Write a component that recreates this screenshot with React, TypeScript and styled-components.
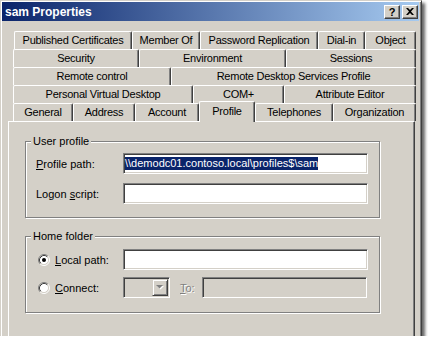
import React from "react";
import styled, {createGlobalStyle} from "styled-components";

const GlobalStyle = createGlobalStyle`
  html, body {
    margin: 0;
    padding: 0;
    background: #ffffff;
  }
  body {
    font-family: "Liberation Sans", Arial, sans-serif;
    font-size: 11px;
    color: #000;
  }
`;

const Window = styled.div`
  width: 422px;
  height: 336px;
  box-sizing: border-box;
  background: #d4d0c8;
  border: 1px solid;
  border-color: #d4d0c8 #404040 #404040 #d4d0c8;
  border-bottom: none;
  padding: 1px 2px 0 1px;
  box-shadow: inset 1px 1px 0 #fff, inset -1px 0 0 #808080, 3px 3px 3px rgba(0, 0, 0, 0.6);
  overflow: hidden;
  display: flex;
  flex-direction: column;
`;

const TitleBar = styled.div`
  height: 19px;
  flex-shrink: 0;
  display: flex;
  align-items: center;
  padding: 0 1px 0 3px;
  background: linear-gradient(to right, #0a246a, #a6caf0);
`;

const Title = styled.span`
  flex: 1;
  color: #fff;
  font-weight: bold;
  font-size: 12px;
`;

const CaptionButton = styled.div`
  width: 16px;
  height: 14px;
  margin-left: 2px;
  box-sizing: border-box;
  background: #d4d0c8;
  border: 1px solid;
  border-color: #fff #404040 #404040 #fff;
  box-shadow: inset -1px -1px 0 #808080;
  display: flex;
  align-items: center;
  justify-content: center;
  font-weight: bold;
  font-size: 11px;
  line-height: 12px;
`;

const TabControl = styled.div`
  margin: 10px 0 0 6px;
  display: flex;
  flex-direction: column;
`;

const TabRow = styled.div<{ $indent: number }>`
  display: flex;
  align-items: flex-end;
  height: 18px;
  padding-left: ${p => p.$indent}px;
`;

const Tab = styled.div<{ $w: number; $selected?: boolean }>`
  width: ${p => p.$w}px;
  height: ${p => (p.$selected ? 21 : 18)}px;
  margin-top: ${p => (p.$selected ? -2 : 0)}px;
  margin-bottom: ${p => (p.$selected ? -1 : 0)}px;
  position: ${p => (p.$selected ? "relative" : "static")};
  z-index: ${p => (p.$selected ? 1 : "auto")};
  box-sizing: border-box;
  flex-shrink: 0;
  background: #d4d0c8;
  border-top: 1px solid #fff;
  border-left: 1px solid #fff;
  border-right: 1px solid #404040;
  border-radius: 2px 2px 0 0;
  box-shadow: inset -1px 0 0 #808080;
  text-align: center;
  line-height: ${p => (p.$selected ? 18 : 16)}px;
  letter-spacing: -0.25px;
  white-space: nowrap;
`;

const Panel = styled.div`
  width: 407px;
  height: 240px;
  box-sizing: border-box;
  border-top: 1px solid #fff;
  border-left: 1px solid #fff;
  border-right: 1px solid #404040;
  box-shadow: inset -1px 0 0 #808080;
  display: flex;
  flex-direction: column;
  padding: 19px 0 0 16px;
  gap: 18px;
`;

const GroupBox = styled.div<{ $pad: string; $gap: number }>`
  position: relative;
  width: 355px;
  height: 77px;
  box-sizing: border-box;
  border: 1px solid #808080;
  box-shadow: inset 1px 1px 0 #fff, 1px 1px 0 #fff;
  padding: ${p => p.$pad};
  display: flex;
  flex-direction: column;
  gap: ${p => p.$gap}px;
`;

const Legend = styled.span`
  position: absolute;
  top: -8px;
  left: 5px;
  padding: 0 2px;
  background: #d4d0c8;
  line-height: 14px;
`;

const FieldRow = styled.div`
  display: flex;
  align-items: center;
  height: 21px;
`;

const Label = styled.span<{ $w: number; $ml?: number; $disabled?: boolean }>`
  width: ${p => p.$w}px;
  margin-left: ${p => p.$ml ?? 0}px;
  flex-shrink: 0;
  white-space: nowrap;
  color: ${p => (p.$disabled ? "#808080" : "#000")};
  text-shadow: ${p => (p.$disabled ? "1px 1px 0 #fff" : "none")};
`;

const RadioLabel = styled.span`
  width: 85px;
  display: flex;
  align-items: center;
  gap: 5px;
  flex-shrink: 0;
  white-space: nowrap;
`;

const TextBox = styled.div<{ $w: number; $disabled?: boolean }>`
  width: ${p => p.$w}px;
  height: 21px;
  box-sizing: border-box;
  flex-shrink: 0;
  border: 1px solid;
  border-color: #808080 #fff #fff #808080;
  box-shadow: inset 1px 1px 0 #404040, inset -1px -1px 0 #d4d0c8;
  background: ${p => (p.$disabled ? "#d4d0c8" : "#fff")};
  padding: 1px;
  display: flex;
  align-items: center;
  justify-content: ${p => (p.$disabled ? "flex-end" : "flex-start")};
  white-space: nowrap;
  overflow: hidden;
`;

const Selection = styled.span`
  background: #0a246a;
  color: #fff;
  line-height: 13px;
`;

const DropButton = styled.div`
  width: 16px;
  height: 17px;
  box-sizing: border-box;
  border: 1px solid;
  border-color: #d4d0c8 #404040 #404040 #d4d0c8;
  box-shadow: inset 1px 1px 0 #fff, inset -1px -1px 0 #808080;
  display: flex;
  align-items: center;
  justify-content: center;
`;

type TabDef = { label: string; w: number; selected?: boolean };

const tabRows: { indent: number; tabs: TabDef[] }[] = [
  {
    indent: 6, tabs: [
      {label: "Published Certificates", w: 118},
      {label: "Member Of", w: 68},
      {label: "Password Replication", w: 118},
      {label: "Dial-in", w: 47},
      {label: "Object", w: 51},
    ]
  },
  {
    indent: 5, tabs: [
      {label: "Security", w: 126},
      {label: "Environment", w: 147},
      {label: "Sessions", w: 130},
    ]
  },
  {
    indent: 5, tabs: [
      {label: "Remote control", w: 158},
      {label: "Remote Desktop Services Profile", w: 245},
    ]
  },
  {
    indent: 5, tabs: [
      {label: "Personal Virtual Desktop", w: 180},
      {label: "COM+", w: 91},
      {label: "Attribute Editor", w: 132},
    ]
  },
  {
    indent: 5, tabs: [
      {label: "General", w: 60},
      {label: "Address", w: 62},
      {label: "Account", w: 64},
      {label: "Profile", w: 56, selected: true},
      {label: "Telephones", w: 78},
      {label: "Organization", w: 83},
    ]
  },
];

const Radio = ({checked}: { checked?: boolean }) => (
  <svg width="12" height="12" viewBox="0 0 12 12">
    <circle cx="6" cy="6" r="4.5" fill="#fff"/>
    <path d="M2.11 9.89 A5.5 5.5 0 0 1 9.89 2.11" stroke="#808080" fill="none"/>
    <path d="M9.89 2.11 A5.5 5.5 0 0 1 2.11 9.89" stroke="#fff" fill="none"/>
    <path d="M2.82 9.18 A4.5 4.5 0 0 1 9.18 2.82" stroke="#404040" fill="none"/>
    <path d="M9.18 2.82 A4.5 4.5 0 0 1 2.82 9.18" stroke="#d4d0c8" fill="none"/>
    {checked && <circle cx="6" cy="6" r="2" fill="#000"/>}
  </svg>
);

const CloseGlyph = () => (
  <svg width="8" height="7" viewBox="0 0 8 7">
    <path d="M0 0 H2 L4 2 L6 0 H8 L5 3.5 L8 7 H6 L4 5 L2 7 H0 L3 3.5 Z" fill="#000"/>
  </svg>
);

const DisabledArrow = () => (
  <svg width="8" height="5" viewBox="0 0 8 5">
    <path d="M1 1 H8 L4.5 4.5 Z" fill="#fff"/>
    <path d="M0 0 H7 L3.5 3.5 Z" fill="#808080"/>
  </svg>
);

const App = () => {
  return (
    <>
      <GlobalStyle/>
      <Window>
        <TitleBar>
          <Title>sam Properties</Title>
          <CaptionButton>?</CaptionButton>
          <CaptionButton><CloseGlyph/></CaptionButton>
        </TitleBar>
        <TabControl>
          {tabRows.map((row, i) => (
            <TabRow key={i} $indent={row.indent}>
              {row.tabs.map(tab => (
                <Tab key={tab.label} $w={tab.w} $selected={tab.selected}>{tab.label}</Tab>
              ))}
            </TabRow>
          ))}
          <Panel>
            <GroupBox $pad="11px 0 0 10px" $gap={9}>
              <Legend>User profile</Legend>
              <FieldRow>
                <Label $w={87}><u>P</u>rofile path:</Label>
                <TextBox $w={245}>
                  <Selection>\\demodc01.contoso.local\profiles$\sam</Selection>
                </TextBox>
              </FieldRow>
              <FieldRow>
                <Label $w={87}>Logon <u>s</u>cript:</Label>
                <TextBox $w={245}/>
              </FieldRow>
            </GroupBox>
            <GroupBox $pad="12px 0 0 12px" $gap={7}>
              <Legend>Home folder</Legend>
              <FieldRow>
                <RadioLabel><Radio checked/><span><u>L</u>ocal path:</span></RadioLabel>
                <TextBox $w={245}/>
              </FieldRow>
              <FieldRow>
                <RadioLabel><Radio/><span><u>C</u>onnect:</span></RadioLabel>
                <TextBox $w={47} $disabled>
                  <DropButton><DisabledArrow/></DropButton>
                </TextBox>
                <Label $w={22} $ml={10} $disabled><u>T</u>o:</Label>
                <TextBox $w={165} $disabled/>
              </FieldRow>
            </GroupBox>
          </Panel>
        </TabControl>
      </Window>
    </>
  );
};

export default App;
